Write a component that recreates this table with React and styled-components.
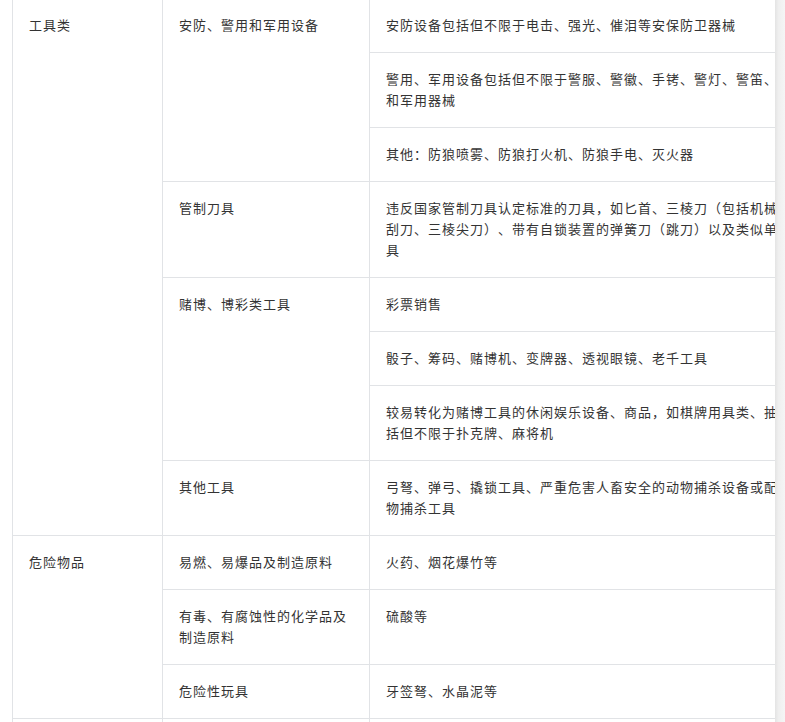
import React from "react";
import styled, { createGlobalStyle } from "styled-components";

const GlobalStyle = createGlobalStyle`
  html, body {
    margin: 0;
    padding: 0;
    background: #fff;
  }
  body {
    font-family: "Noto Sans CJK SC", "Noto Sans", sans-serif;
  }
`;

const groups = [
  {
    cat: "工具类",
    subs: [
      {
        name: "安防、警用和军用设备",
        items: [
          "安防设备包括但不限于电击、强光、催泪等安保防卫器械",
          "警用、军用设备包括但不限于警服、警徽、手铐、警灯、警笛、警棍等警用具和军用器械",
          "其他：防狼喷雾、防狼打火机、防狼手电、灭火器",
        ],
      },
      {
        name: "管制刀具",
        items: [
          "违反国家管制刀具认定标准的刀具，如匕首、三棱刀（包括机械加工用的三棱刮刀、三棱尖刀）、带有自锁装置的弹簧刀（跳刀）以及类似单刃、双刃的刀具",
        ],
      },
      {
        name: "赌博、博彩类工具",
        items: [
          "彩票销售",
          "骰子、筹码、赌博机、变牌器、透视眼镜、老千工具",
          "较易转化为赌博工具的休闲娱乐设备、商品，如棋牌用具类、抽奖用具类，包括但不限于扑克牌、麻将机",
        ],
      },
      {
        name: "其他工具",
        items: [
          "弓弩、弹弓、撬锁工具、严重危害人畜安全的动物捕杀设备或配套用的各类动物捕杀工具",
        ],
      },
    ],
  },
  {
    cat: "危险物品",
    subs: [
      { name: "易燃、易爆品及制造原料", items: ["火药、烟花爆竹等"] },
      { name: "有毒、有腐蚀性的化学品及制造原料", items: ["硫酸等"] },
      { name: "危险性玩具", items: ["牙签弩、水晶泥等"] },
    ],
  },
  {
    cat: "违禁药品",
    subs: [{ name: "毒品及吸毒工具", items: ["毒品、易制毒化学品及吸食工具"] }],
  },
];

const App = () => {
  return (
    <>
      <GlobalStyle />
      <Viewport>
        <ScrollArea>
          <Table>
            {groups.map((g) => {
              const total = g.subs.reduce((n, s) => n + s.items.length, 0);
              return (
                <React.Fragment key={g.cat}>
                  <Cell $col={1} $span={total}>{g.cat}</Cell>
                  {g.subs.map((s) => (
                    <React.Fragment key={s.name}>
                      <Cell $col={2} $span={s.items.length}>{s.name}</Cell>
                      {s.items.map((it) => (
                        <Cell key={it} $col={3} $span={1}>{it}</Cell>
                      ))}
                    </React.Fragment>
                  ))}
                </React.Fragment>
              );
            })}
          </Table>
        </ScrollArea>
        <Gutter />
      </Viewport>
    </>
  );
};

export default App;

const Viewport = styled.div`
  display: flex;
  width: 785px;
  height: 722px;
  overflow: hidden;
`;

const ScrollArea = styled.div`
  flex: 0 0 775px;
  overflow: hidden;
  padding-left: 12px;
  box-sizing: border-box;
`;

const Gutter = styled.div`
  flex: 0 0 10px;
  background: linear-gradient(to right, #e4e4e4 0%, #efefef 35%, #f5f5f5 100%);
`;

const Table = styled.div`
  display: grid;
  grid-template-columns: 150px 207px 513px;
  width: max-content;
  margin-top: -2px;
  border-right: 1px solid #e1e3e6;
  border-bottom: 1px solid #e1e3e6;
`;

const Cell = styled.div`
  grid-column: ${(p) => p.$col};
  grid-row: span ${(p) => p.$span};
  box-sizing: border-box;
  padding: 15px 16px 17px;
  border-top: 1px solid #e1e3e6;
  border-left: 1px solid #e1e3e6;
  font-size: 13px;
  line-height: 21px;
  letter-spacing: 1px;
  color: #333;
  word-break: break-all;
  text-spacing-trim: space-all;
  font-feature-settings: "halt" 0, "palt" 0;
`;
